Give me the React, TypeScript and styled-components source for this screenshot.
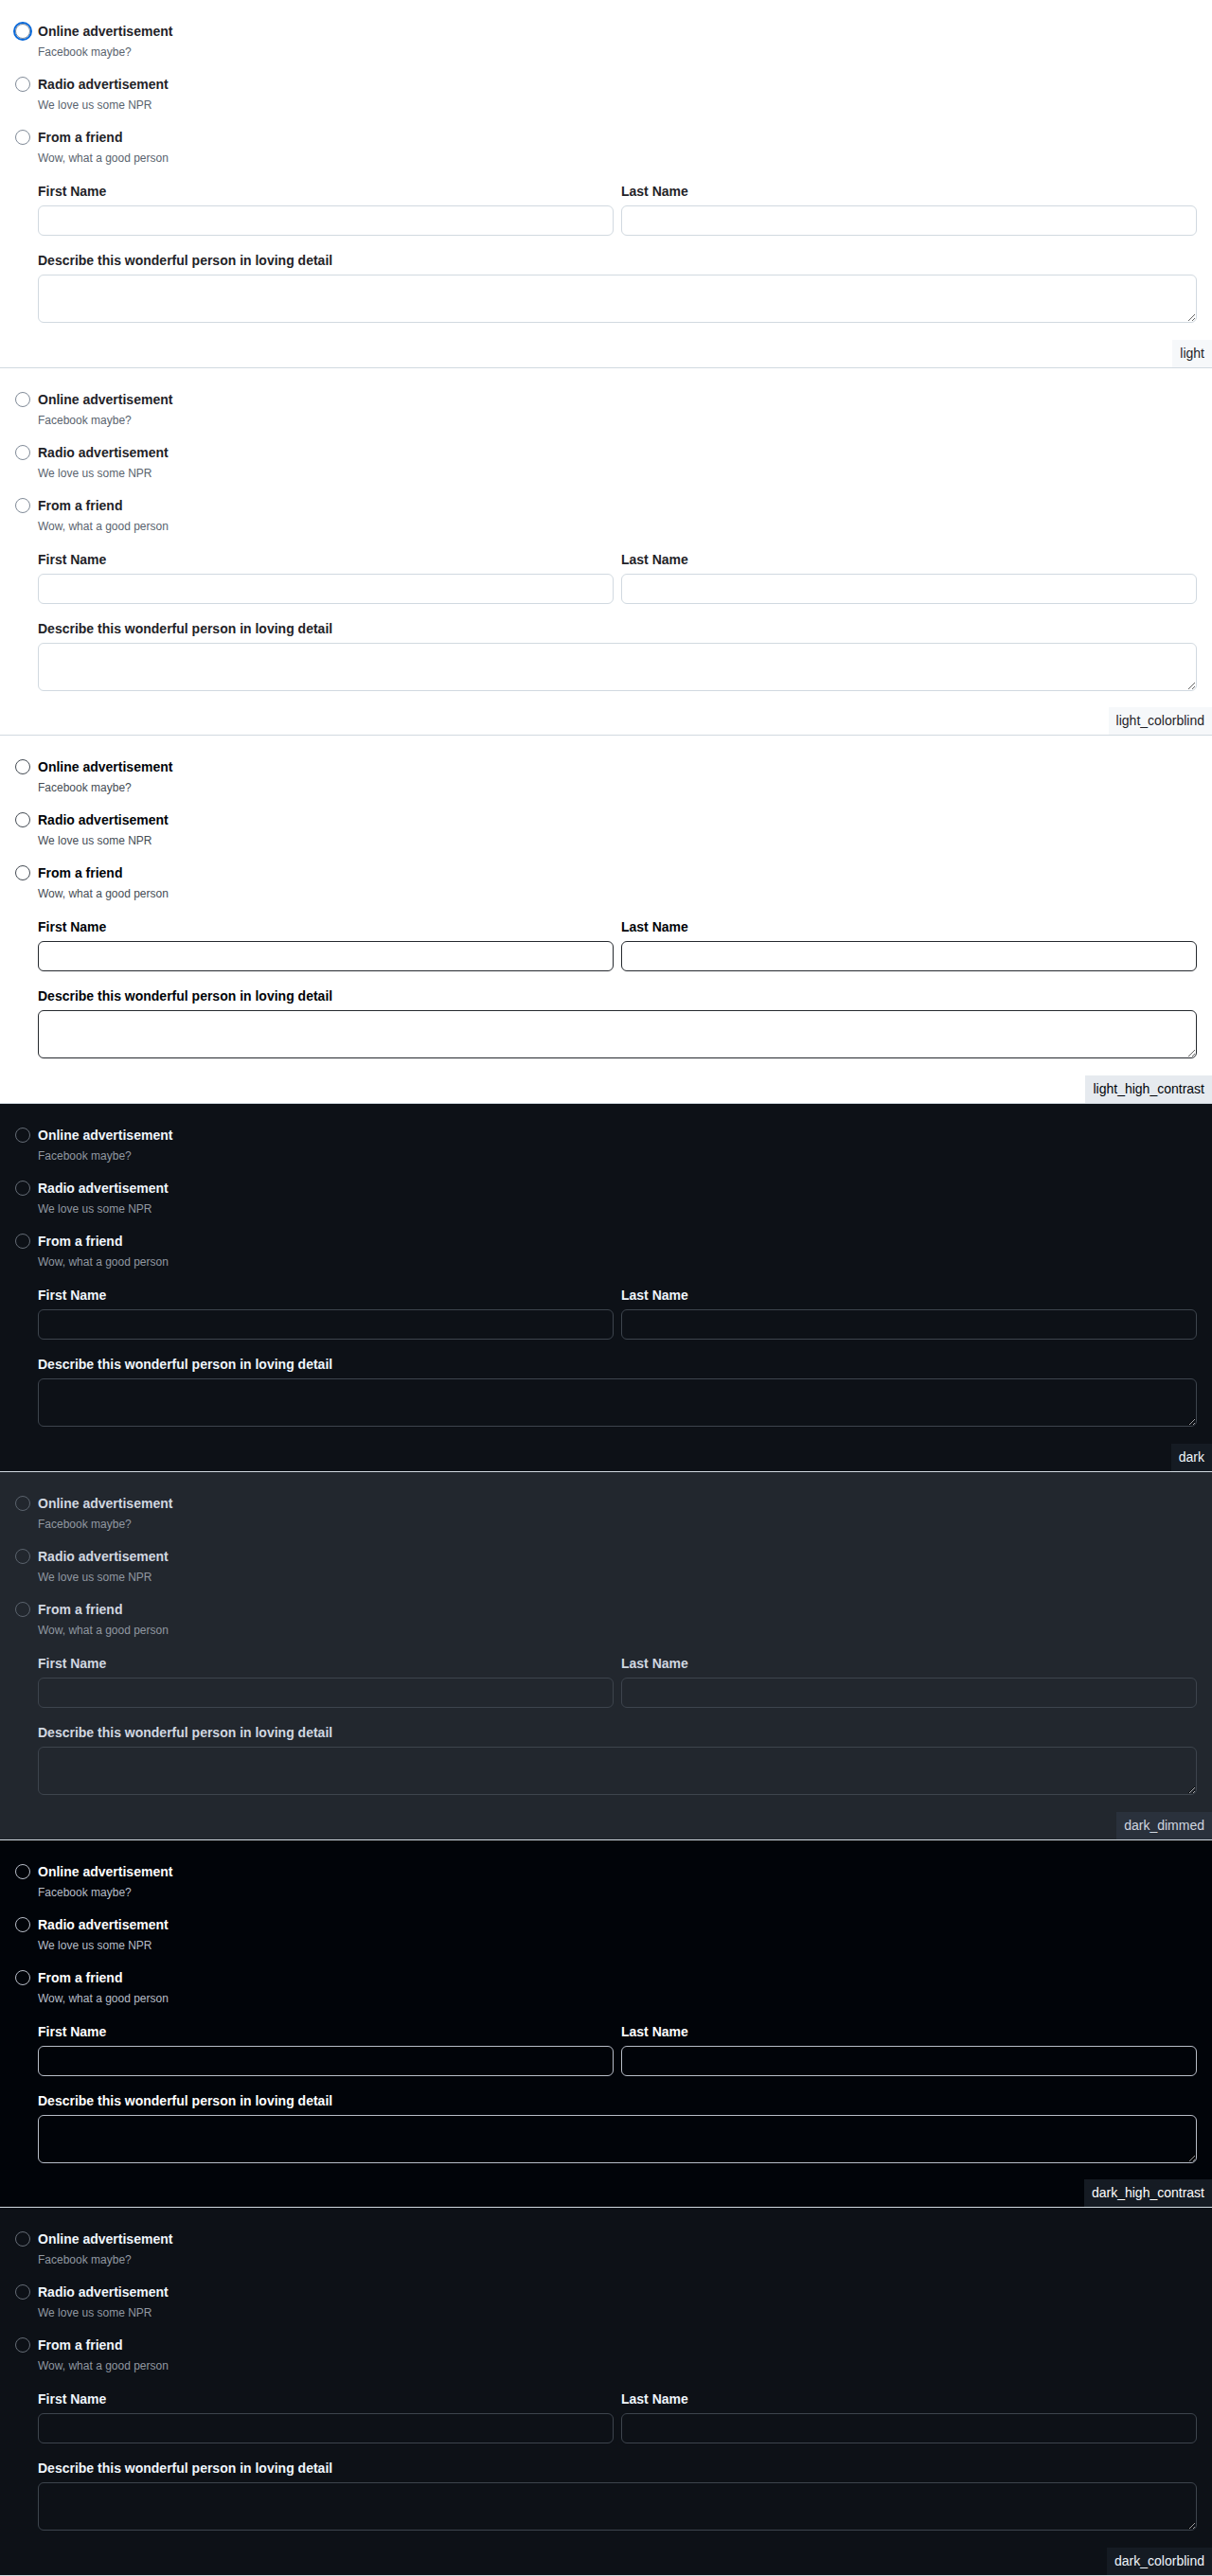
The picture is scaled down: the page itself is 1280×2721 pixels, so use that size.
import React from "react";
import styled, { createGlobalStyle } from "styled-components";

type Theme = {
  name: string;
  bg: string;
  fg: string;
  muted: string;
  radio: string;
  border: string;
  inputBg: string;
  tagBg: string;
  scheme: "light" | "dark";
};

const lightBase = {
  bg: "#ffffff",
  fg: "#1f2328",
  muted: "#59636e",
  radio: "#818b98",
  border: "#d1d9e0",
  inputBg: "#ffffff",
  tagBg: "#f6f8fa",
  scheme: "light" as const,
};

const darkBase = {
  bg: "#0d1117",
  fg: "#f0f6fc",
  muted: "#9198a1",
  radio: "#656c76",
  border: "#3d444d",
  inputBg: "#0d1117",
  tagBg: "#151b23",
  scheme: "dark" as const,
};

const themes: Theme[] = [
  { name: "light", ...lightBase },
  { name: "light_colorblind", ...lightBase },
  {
    name: "light_high_contrast",
    bg: "#ffffff",
    fg: "#010409",
    muted: "#454c54",
    radio: "#454c54",
    border: "#25292e",
    inputBg: "#ffffff",
    tagBg: "#e6eaef",
    scheme: "light",
  },
  { name: "dark", ...darkBase },
  {
    name: "dark_dimmed",
    bg: "#22272e",
    fg: "#d1d7e0",
    muted: "#9198a1",
    radio: "#5b636d",
    border: "#3d444d",
    inputBg: "#22272e",
    tagBg: "#2a313c",
    scheme: "dark",
  },
  {
    name: "dark_high_contrast",
    bg: "#010409",
    fg: "#ffffff",
    muted: "#b7bdc8",
    radio: "#b7bdc8",
    border: "#b7bdc8",
    inputBg: "#010409",
    tagBg: "#151b23",
    scheme: "dark",
  },
  { name: "dark_colorblind", ...darkBase },
];

const GlobalStyle = createGlobalStyle`
  html, body {
    margin: 0;
    padding: 0;
  }
  body {
    font-family: "Liberation Sans", Arial, sans-serif;
  }
  *, *::before, *::after {
    box-sizing: border-box;
  }
`;

const Page = styled.div`
  display: flex;
  flex-direction: column;
  height: 100vh;
  min-height: 2721px;
`;

const Section = styled.section<{ $t: Theme }>`
  position: relative;
  flex: 1 1 0;
  background: ${(p) => p.$t.bg};
  color: ${(p) => p.$t.fg};
  border-bottom: 1px solid #d1d9e0;
  padding: 23px 16px 0 16px;
  color-scheme: ${(p) => p.$t.scheme};
`;

const Group = styled.div`
  display: flex;
  flex-direction: column;
  gap: 16px;
`;

const Option = styled.label`
  display: flex;
  align-items: flex-start;
  gap: 8px;
  cursor: pointer;
`;

const Radio = styled.input<{ $t: Theme; $focused?: boolean }>`
  appearance: none;
  margin: 2px 0 0 0;
  width: 16px;
  height: 16px;
  flex: 0 0 16px;
  border-radius: 50%;
  border: 1px solid ${(p) => p.$t.radio};
  background: ${(p) => p.$t.inputBg};
  outline: ${(p) => (p.$focused ? "2px solid #0969da" : "none")};
  outline-offset: 0;
`;

const OptionText = styled.span`
  display: flex;
  flex-direction: column;
  gap: 4px;
`;

const OptionLabel = styled.span`
  font-size: 14px;
  line-height: 20px;
  font-weight: 700;
`;

const Caption = styled.span<{ $t: Theme }>`
  font-size: 12px;
  line-height: 16px;
  color: ${(p) => p.$t.muted};
`;

const Nested = styled.div`
  margin: 17px 0 0 24px;
  display: flex;
  flex-direction: column;
  gap: 16px;
`;

const NameRow = styled.div`
  display: grid;
  grid-template-columns: 1fr 1fr;
  gap: 8px;
`;

const Field = styled.div`
  display: flex;
  flex-direction: column;
  gap: 5px;
`;

const FieldLabel = styled.label`
  font-size: 14px;
  line-height: 20px;
  font-weight: 700;
`;

const TextInput = styled.input<{ $t: Theme }>`
  height: 32px;
  width: 100%;
  border: 1px solid ${(p) => p.$t.border};
  border-radius: 6px;
  background: ${(p) => p.$t.inputBg};
  color: ${(p) => p.$t.fg};
  font-family: "Liberation Sans", Arial, sans-serif;
  font-size: 14px;
  padding: 0 12px;
  outline: none;
`;

const TextArea = styled.textarea<{ $t: Theme }>`
  display: block;
  height: 51px;
  width: 100%;
  border: 1px solid ${(p) => p.$t.border};
  border-radius: 6px;
  background: ${(p) => p.$t.inputBg};
  color: ${(p) => p.$t.fg};
  font-family: "Liberation Sans", Arial, sans-serif;
  font-size: 14px;
  padding: 8px 12px;
  margin: 0;
  resize: both;
  outline: none;
`;

const Tag = styled.div<{ $t: Theme }>`
  position: absolute;
  right: 0;
  bottom: 0;
  padding: 4px 8px;
  font-size: 14px;
  line-height: 21px;
  background: ${(p) => p.$t.tagBg};
  color: ${(p) => p.$t.fg};
`;

const options = [
  { label: "Online advertisement", caption: "Facebook maybe?" },
  { label: "Radio advertisement", caption: "We love us some NPR" },
  { label: "From a friend", caption: "Wow, what a good person" },
];

function ThemeSection({ t, index }: { t: Theme; index: number }) {
  return (
    <Section $t={t}>
      <Group>
        {options.map((o, i) => (
          <Option key={o.label}>
            <Radio
              type="radio"
              name={`source-${t.name}`}
              $t={t}
              $focused={index === 0 && i === 0}
            />
            <OptionText>
              <OptionLabel>{o.label}</OptionLabel>
              <Caption $t={t}>{o.caption}</Caption>
            </OptionText>
          </Option>
        ))}
      </Group>
      <Nested>
        <NameRow>
          <Field>
            <FieldLabel htmlFor={`first-${t.name}`}>First Name</FieldLabel>
            <TextInput id={`first-${t.name}`} $t={t} />
          </Field>
          <Field>
            <FieldLabel htmlFor={`last-${t.name}`}>Last Name</FieldLabel>
            <TextInput id={`last-${t.name}`} $t={t} />
          </Field>
        </NameRow>
        <Field>
          <FieldLabel htmlFor={`desc-${t.name}`}>
            Describe this wonderful person in loving detail
          </FieldLabel>
          <TextArea id={`desc-${t.name}`} $t={t} />
        </Field>
      </Nested>
      <Tag $t={t}>{t.name}</Tag>
    </Section>
  );
}

export default function App() {
  return (
    <>
      <GlobalStyle />
      <Page>
        {themes.map((t, i) => (
          <ThemeSection key={t.name} t={t} index={i} />
        ))}
      </Page>
    </>
  );
}
